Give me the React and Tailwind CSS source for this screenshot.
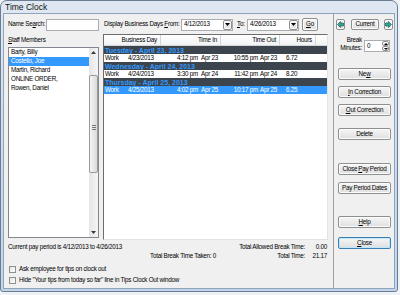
const BTN = "border border-[#8e8f8f] rounded-[2px] bg-gradient-to-b from-[#f6f6f6] to-[#dfdfdf] shadow-[inset_0_0_0_1px_#fcfcfc]";

function Btn({ children, className = "" }) {
  return (
    <div className={`h-[12px] w-[53px] ml-[4px] flex items-center justify-center ${BTN} ${className}`}>
      {children}
    </div>
  );
}

function ArrowBtn({ dir, className = "" }) {
  const pts =
    dir === "l"
      ? "0.5,3.5 3.5,0.5 3.5,2 6.5,2 6.5,5 3.5,5 3.5,6.5"
      : "6.5,3.5 3.5,0.5 3.5,2 0.5,2 0.5,5 3.5,5 3.5,6.5";
  return (
    <div className={`w-[9px] h-[11px] flex items-center justify-center ${BTN} ${className}`}>
      <svg width="7" height="7" viewBox="0 0 7 7">
        <polygon points={pts} fill="#25a894" stroke="#1b4f4a" strokeWidth="0.6" />
      </svg>
    </div>
  );
}

function DatePick({ v, className = "" }) {
  return (
    <div className={`w-[52px] h-[12px] bg-white border border-[#abadb3] flex items-center ${className}`}>
      <span className="pl-[2px] flex-1">{v}</span>
      <div className={`w-[9px] h-[10px] flex items-center justify-center ${BTN}`}>
        <svg width="5" height="3" viewBox="0 0 5 3">
          <polygon points="0,0 5,0 2.5,3" fill="#000" />
        </svg>
      </div>
    </div>
  );
}

function Group({ children }) {
  return (
    <div className="h-[8px] bg-[#3c454d] flex items-center pl-[1px] text-[7px] font-bold tracking-normal text-[#3399ff]">
      {children}
    </div>
  );
}

function DataRow({ d, tin, din, tout, dout, h, sel }) {
  return (
    <div className={`h-[8px] flex items-center ${sel ? "bg-[#3399ff] text-white" : "bg-white"}`}>
      <span className="w-[24px] pl-[1px]">Work</span>
      <span className="w-[31px]">{d}</span>
      <span className="w-[39px] text-right">{tin}</span>
      <span className="w-[22px] pl-[3px]">{din}</span>
      <span className="w-[38px] text-right">{tout}</span>
      <span className="w-[22px] pl-[2px]">{dout}</span>
      <span className="pl-[6px]">{h}</span>
    </div>
  );
}

function Check({ children }) {
  return (
    <div className="h-[9px] flex items-center">
      <div className="ml-[5px] w-[7px] h-[7px] border border-[#8e8f8f] bg-gradient-to-br from-[#e4e4e4] to-[#ffffff]" />
      <span className="ml-[3px]">{children}</span>
    </div>
  );
}

export default function App() {
  return (
    <div className="w-[400px] h-[295px] bg-[#eef2f7] overflow-hidden font-['Liberation_Sans',Arial,sans-serif] text-[6.3px] tracking-[-0.25px] leading-none text-black">
      <div className="w-[398px] h-[292px] border border-[#6a7d93] rounded-t-[7px] rounded-b-[3px] bg-gradient-to-b from-[#dfe8f2] via-[#cddcec] to-[#c2d5ea] flex flex-col px-[2px] pb-[2px] overflow-hidden">
        <div className="h-[12px] flex items-center pl-[2px] text-[8.5px] tracking-normal text-[#111]">Time Clock</div>
        <div className="flex-1 border border-[#8fa3ba] bg-[#f0f0f0] flex">
          <div className="w-[329px] flex flex-col">
            <div className="mt-[4px] h-[13px] flex items-center">
              <span className="ml-[4px] w-[38px]">
                Name Se<span className="underline">a</span>rch:
              </span>
              <div className="w-[53px] h-[12px] bg-white border border-[#abadb3]" />
              <span className="ml-[5px] w-[77px]">
                Display Business Days <span className="underline">F</span>rom:
              </span>
              <DatePick v="4/12/2013" />
              <span className="ml-[4px] w-[10px]">
                <span className="underline">T</span>o:
              </span>
              <DatePick v="4/26/2013" />
              <div className={`ml-[3px] w-[16px] h-[13px] flex items-center justify-center ${BTN}`}>
                <span className="underline">G</span>o
              </div>
            </div>

            <div className="mt-[3px] h-[206px] flex">
              <div className="ml-[4px] w-[91px] flex flex-col">
                <div className="mt-[3px] h-[7px] flex items-center">
                  <span className="underline">S</span>taff Members
                </div>
                <div className="mt-[3px] h-[191px] bg-white border border-[#828790] flex">
                  <div className="flex-1 flex flex-col">
                    <div className="h-[9px] flex items-center pl-[2px]">Barty, Billy</div>
                    <div className="h-[9px] flex items-center pl-[2px] bg-[#3399ff] text-white">Costello, Joe</div>
                    <div className="h-[9px] flex items-center pl-[2px]">Martin, Richard</div>
                    <div className="h-[9px] flex items-center pl-[2px]">ONLINE ORDER,</div>
                    <div className="h-[9px] flex items-center pl-[2px]">Rowen, Daniel</div>
                  </div>
                  <div className="w-[9px] bg-gradient-to-r from-[#e6e6e6] to-[#f4f4f4] flex flex-col">
                    <div className="h-[9px] flex items-center justify-center">
                      <svg width="5" height="3" viewBox="0 0 5 3">
                        <polygon points="0,3 5,3 2.5,0" fill="#3a3a3a" />
                      </svg>
                    </div>
                    <div className="mt-[18px] h-[98px] rounded-[2px] border border-[#9a9a9a] bg-gradient-to-r from-[#f5f5f5] to-[#dadada] flex flex-col items-center justify-center gap-[1px] pt-[6px]">
                      <div className="w-[4px] h-px bg-[#777]" />
                      <div className="w-[4px] h-px bg-[#777]" />
                      <div className="w-[4px] h-px bg-[#777]" />
                    </div>
                    <div className="flex-1" />
                    <div className="h-[9px] flex items-center justify-center">
                      <svg width="5" height="3" viewBox="0 0 5 3">
                        <polygon points="0,0 5,0 2.5,3" fill="#3a3a3a" />
                      </svg>
                    </div>
                  </div>
                </div>
              </div>

              <div className="ml-[4px] w-[225px] h-[206px] bg-white border-l border-t border-[#6d6d6d] border-r-[#e3e3e3] border-b-[#e3e3e3] border-r border-b flex flex-col">
                <div className="h-[11px] flex bg-gradient-to-b from-[#ffffff] to-[#f1f2f4] border-b border-[#d5d5d5]">
                  <div className="w-[57px] border-r border-[#d5d5d5] flex items-center justify-end pr-[3px]">Business Day</div>
                  <div className="w-[60px] border-r border-[#d5d5d5] flex items-center justify-end pr-[3px]">Time In</div>
                  <div className="w-[59px] border-r border-[#d5d5d5] flex items-center justify-end pr-[3px]">Time Out</div>
                  <div className="w-[36px] border-r border-[#d5d5d5] flex items-center justify-end pr-[3px]">Hours</div>
                  <div className="flex-1" />
                </div>
                <Group>Tuesday - April 23, 2013</Group>
                <DataRow d="4/23/2013" tin="4:12 pm" din="Apr 23" tout="10:55 pm" dout="Apr 23" h="6.72" />
                <Group>Wednesday - April 24, 2013</Group>
                <DataRow d="4/24/2013" tin="3:30 pm" din="Apr 24" tout="11:42 pm" dout="Apr 24" h="8.20" />
                <Group>Thursday - April 25, 2013</Group>
                <DataRow d="4/25/2013" tin="4:02 pm" din="Apr 25" tout="10:17 pm" dout="Apr 25" h="6.25" sel />
              </div>
            </div>

            <div className="mt-[3px] h-[8px] flex items-center">
              <span className="ml-[4px] flex-1">Current pay period is 4/12/2013 to 4/26/2013</span>
              <span className="text-right">Total Allowed Break Time:</span>
              <span className="w-[22px] text-right">0.00</span>
              <span className="w-[6px]" />
            </div>
            <div className="mt-[1px] h-[8px] flex items-center">
              <span className="ml-[146px] flex-1">Total Break Time Taken: 0</span>
              <span className="text-right">Total Time:</span>
              <span className="w-[22px] text-right">21.17</span>
              <span className="w-[6px]" />
            </div>

            <div className="mt-[5px] flex flex-col gap-[2px]">
              <Check>Ask employee for tips on clock out</Check>
              <Check>Hide "Your tips from today so far" line in Tips Clock Out window</Check>
            </div>
          </div>

          <div className="flex-1 border-l border-[#a0a0a0] flex flex-col">
            <div className="mt-[5px] h-[11px] flex items-center">
              <ArrowBtn dir="l" className="ml-[2px]" />
              <div className={`ml-[6px] w-[28px] h-[11px] flex items-center justify-center ${BTN}`}>Current</div>
              <ArrowBtn dir="r" className="ml-[5px]" />
            </div>
            <div className="mt-[6px] h-[16px] flex items-end">
              <div className="w-[28px] flex flex-col items-end">
                <div className="h-[8px] flex items-center">Break</div>
                <div className="h-[8px] flex items-center">Minutes:</div>
              </div>
              <div className="ml-[2px] w-[26px] h-[12px] bg-white border border-[#abadb3] flex">
                <span className="flex-1 pl-[2px] pt-[2px]">0</span>
                <div className="w-[7px] flex flex-col">
                  <div className={`flex-1 flex items-center justify-center ${BTN}`}>
                    <svg width="4" height="2" viewBox="0 0 4 2"><polygon points="0,2 4,2 2,0" fill="#000" /></svg>
                  </div>
                  <div className={`flex-1 flex items-center justify-center ${BTN}`}>
                    <svg width="4" height="2" viewBox="0 0 4 2"><polygon points="0,0 4,0 2,2" fill="#000" /></svg>
                  </div>
                </div>
              </div>
            </div>
            <Btn className="mt-[16px]">Ne<span className="underline">w</span></Btn>
            <Btn className="mt-[6px]"><span className="underline">I</span>n Correction</Btn>
            <Btn className="mt-[6px]"><span className="underline">O</span>ut Correction</Btn>
            <Btn className="mt-[12px]">Delete</Btn>
            <Btn className="mt-[23px]">Close <span className="underline ml-[1px]">P</span>ay Period</Btn>
            <Btn className="mt-[7px]">Pay Period Dates</Btn>
            <Btn className="mt-[22px]"><span className="underline">H</span>elp</Btn>
            <Btn className="mt-[9px] !border-[#3c7fb1] !shadow-[inset_0_0_0_1px_#bfe6fb]"><span className="underline">C</span>lose</Btn>
          </div>
        </div>
      </div>
    </div>
  );
}
